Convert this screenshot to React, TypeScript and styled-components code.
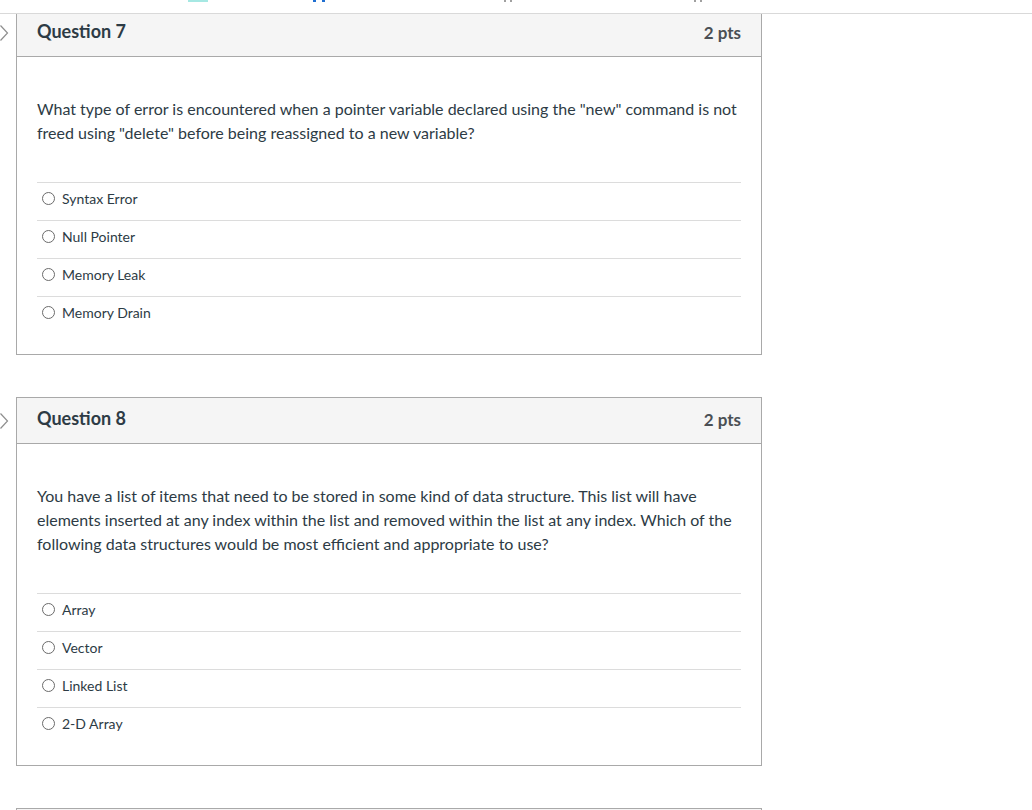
import styled, { createGlobalStyle } from 'styled-components';

const GlobalStyle = createGlobalStyle`
  html, body {
    margin: 0;
    padding: 0;
    background: #fff;
  }
  body {
    font-family: Lato, "Noto Sans", "Liberation Sans", sans-serif;
    color: #2d3b45;
  }
`;

const Page = styled.div`
  width: 1032px;
  height: 810px;
  overflow: hidden;
`;

const TopStrip = styled.div`
  height: 13px;
  border-bottom: 1px solid #d9d9d9;
  > svg {
    display: block;
  }
`;

const List = styled.div`
  display: flex;
  flex-direction: column;
  gap: 42px;
  padding-left: 16px;
  width: 746px;
`;

const Card = styled.section<{ $cutTop?: boolean }>`
  position: relative;
  border: 1px solid #a9a9a9;
  border-top: ${(p) => (p.$cutTop ? 'none' : '1px solid #a9a9a9')};
`;

const Flag = styled.svg<{ $cutTop?: boolean }>`
  position: absolute;
  left: -18px;
  top: ${(p) => (p.$cutTop ? 10 : 14)}px;
`;

const Header = styled.header<{ $cutTop?: boolean }>`
  display: flex;
  align-items: center;
  justify-content: space-between;
  box-sizing: border-box;
  height: ${(p) => (p.$cutTop ? 43 : 46)}px;
  padding: ${(p) => (p.$cutTop ? '0 20px 8px' : '0 20px 5px')};
  background: #f5f5f5;
  border-bottom: 1px solid #a9a9a9;
`;

const Title = styled.h2`
  margin: 0;
  font-size: 18px;
  font-weight: 700;
  color: #2d3b45;
`;

const Points = styled.span`
  font-size: 17px;
  font-weight: 700;
  color: #4a4f54;
  padding-top: 3px;
`;

const Body = styled.div`
  padding: 40px 20px 20px;
`;

const QuestionText = styled.p`
  margin: 0 0 37px;
  font-size: 16px;
  line-height: 24px;
  color: #2d3b45;
`;

const Answers = styled.div`
  display: flex;
  flex-direction: column;
`;

const Answer = styled.label`
  display: flex;
  align-items: center;
  gap: 7px;
  box-sizing: border-box;
  height: 38px;
  padding: 0 5px 6px;
  border-top: 1px solid #dcdcdc;
  font-size: 14px;
  color: #2d3b45;
  cursor: pointer;
`;

const Radio = styled.span`
  width: 11px;
  height: 11px;
  border: 1px solid #6b6b6b;
  border-radius: 50%;
  background: #fff;
  flex: none;
`;

type Question = {
  title: string;
  points: string;
  text: string;
  answers: string[];
};

const questions: Question[] = [
  {
    title: 'Question 7',
    points: '2 pts',
    text: 'What type of error is encountered when a pointer variable declared using the "new" command is not freed using "delete" before being reassigned to a new variable?',
    answers: ['Syntax Error', 'Null Pointer', 'Memory Leak', 'Memory Drain'],
  },
  {
    title: 'Question 8',
    points: '2 pts',
    text: 'You have a list of items that need to be stored in some kind of data structure. This list will have elements inserted at any index within the list and removed within the list at any index. Which of the following data structures would be most efficient and appropriate to use?',
    answers: ['Array', 'Vector', 'Linked List', '2-D Array'],
  },
];

const QuestionCard = ({ q, cutTop }: { q: Question; cutTop?: boolean }) => (
  <Card $cutTop={cutTop}>
    <Flag $cutTop={cutTop} width="12" height="18" viewBox="0 0 12 18" fill="none">
      <path d="M1.5 1.5 L8.5 9 L1.5 16.5" stroke="#8e8e8e" strokeWidth="1.2" />
    </Flag>
    <Header $cutTop={cutTop}>
      <Title>{q.title}</Title>
      <Points>{q.points}</Points>
    </Header>
    <Body>
      <QuestionText>{q.text}</QuestionText>
      <Answers>
        {q.answers.map((a) => (
          <Answer key={a}>
            <Radio />
            {a}
          </Answer>
        ))}
      </Answers>
    </Body>
  </Card>
);

const App = () => (
  <Page>
    <GlobalStyle />
    <TopStrip>
      {/* bottoms of the content scrolled out above */}
      <svg width="1032" height="2" viewBox="0 0 1032 2">
        <rect x="188" y="0" width="20" height="2" fill="#a6e8e3" />
        <rect x="313" y="0" width="3" height="2" fill="#1f6fd1" />
        <rect x="322" y="0" width="3" height="2" fill="#1f6fd1" />
        <rect x="504" y="0" width="2" height="2" fill="#a0a0a0" />
        <rect x="510" y="0" width="2" height="2" fill="#a0a0a0" />
        <rect x="694" y="0" width="2" height="2" fill="#a0a0a0" />
        <rect x="700" y="0" width="2" height="2" fill="#a0a0a0" />
      </svg>
    </TopStrip>
    <List>
      {questions.map((q, i) => (
        <QuestionCard key={q.title} q={q} cutTop={i === 0} />
      ))}
      <Card>
        <Header />
      </Card>
    </List>
  </Page>
);

export default App;
